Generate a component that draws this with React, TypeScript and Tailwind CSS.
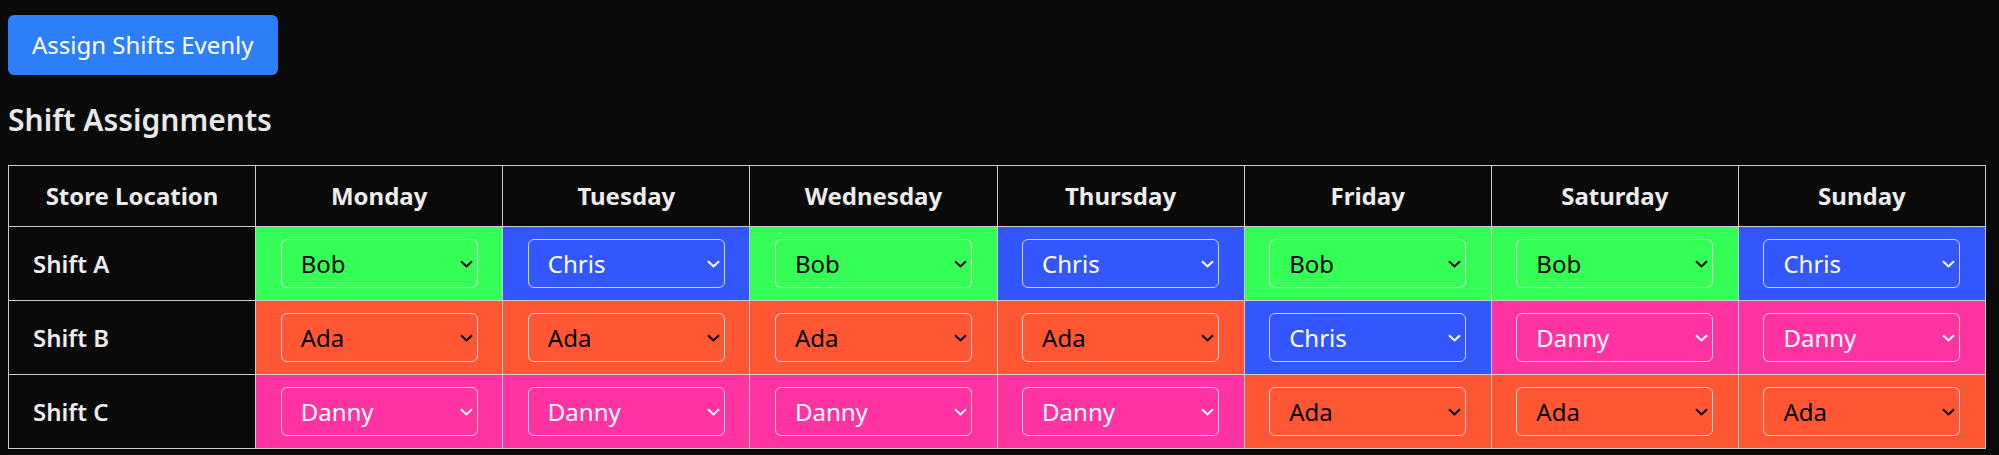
import React from "react";

const days = ["Monday", "Tuesday", "Wednesday", "Thursday", "Friday", "Saturday", "Sunday"];
const people = ["Ada", "Bob", "Chris", "Danny"];

const rows: { label: string; values: string[] }[] = [
  { label: "Shift A", values: ["Bob", "Chris", "Bob", "Chris", "Bob", "Bob", "Chris"] },
  { label: "Shift B", values: ["Ada", "Ada", "Ada", "Ada", "Chris", "Danny", "Danny"] },
  { label: "Shift C", values: ["Danny", "Danny", "Danny", "Danny", "Ada", "Ada", "Ada"] },
];

const cellBg: Record<string, string> = {
  Ada: "bg-[#FF5733]",
  Bob: "bg-[#33FF57]",
  Chris: "bg-[#3357FF]",
  Danny: "bg-[#FF33A1]",
};

const textColor: Record<string, string> = {
  Ada: "text-black",
  Bob: "text-black",
  Chris: "text-white",
  Danny: "text-white",
};

function Cell({ value }: { value: string }) {
  return (
    <td className={`border border-[#cccccc] p-[12px] ${cellBg[value]}`}>
      <div className="relative w-[197px] mx-auto">
        <select
          defaultValue={value}
          className={`block w-full h-[49px] appearance-none bg-transparent border border-[#d4d4d4] rounded-[6px] pl-[19px] pr-[24px] text-[24px] leading-[32px] outline-none ${textColor[value]}`}
          style={{ fontFamily: '"Noto Sans", sans-serif' }}
        >
          {people.map((p) => (
            <option key={p} value={p} className="text-black bg-white">
              {p}
            </option>
          ))}
        </select>
        <svg
          className={`pointer-events-none absolute right-[5px] top-[21px] ${textColor[value]}`}
          width="13"
          height="8"
          viewBox="0 0 13 8"
          fill="none"
        >
          <path d="M1 1.2 L6.5 6.4 L12 1.2" stroke="currentColor" strokeWidth="2.1" />
        </svg>
      </div>
    </td>
  );
}

export default function App() {
  return (
    <div
      className="min-h-[455px] bg-[#0a0a0a] pt-[15px] pl-[8px] text-[#ececec]"
      style={{ fontFamily: '"Noto Sans", sans-serif' }}
    >
      <button className="h-[60px] px-[24px] rounded-[6px] bg-[#2d7ff9] text-white text-[24px] leading-[36px]">
        Assign Shifts Evenly
      </button>
      <h2 className="mt-[22px] mb-[23px] text-[30px] leading-[45px] font-semibold text-[#e8e8e8]">
        Shift Assignments
      </h2>
      <table className="table-fixed border-collapse w-[1978px]">
        <thead>
          <tr>
            <th className="border border-[#cccccc] p-[12px] text-[24px] leading-[36px] font-bold text-center text-[#ececec]">
              Store Location
            </th>
            {days.map((d) => (
              <th
                key={d}
                className="border border-[#cccccc] p-[12px] text-[24px] leading-[36px] font-bold text-center text-[#ececec]"
              >
                {d}
              </th>
            ))}
          </tr>
        </thead>
        <tbody>
          {rows.map((r) => (
            <tr key={r.label}>
              <td className="border border-[#cccccc] py-[12px] pl-[24px] text-[24px] leading-[36px] font-semibold text-left text-[#ececec]">
                {r.label}
              </td>
              {r.values.map((v, i) => (
                <Cell key={i} value={v} />
              ))}
            </tr>
          ))}
        </tbody>
      </table>
    </div>
  );
}
